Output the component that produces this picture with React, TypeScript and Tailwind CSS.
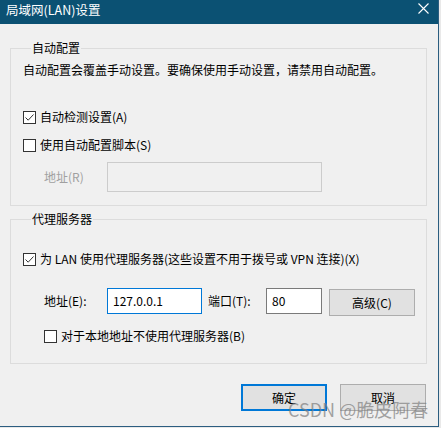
import React from 'react';

const FONT = '[font-family:"Noto_Sans_CJK_SC","Liberation_Sans",sans-serif]';

const CheckBox = ({ checked, label }: { checked?: boolean; label: string }) => (
    <div className="flex items-center gap-[4px] h-[16px]">
        <span className="w-[13px] h-[13px] border border-[#333333] bg-white flex items-center justify-center shrink-0">
            {checked && (
                <svg width="11" height="11" viewBox="0 0 11 11">
                    <path d="M1.5 5.5 L4.2 8.2 L9.5 2.5" fill="none" stroke="#333333" strokeWidth="1" />
                </svg>
            )}
        </span>
        <span className="text-[12px] leading-[16px] text-black whitespace-nowrap">{label}</span>
    </div>
);

const GroupBox = ({ title, className, children }: { title: string; className?: string; children: React.ReactNode }) => (
    <fieldset className={`ml-[10px] w-[417px] border border-[#dcdcdc] pl-[12px] ${className ?? ''}`}>
        <legend className="ml-[8px] px-[1px] text-[12px] leading-[16px] text-black">{title}</legend>
        {children}
    </fieldset>
);

export default function App() {
    return (
        <div className={`w-[441px] h-[428px] bg-[#e9e9e9] ${FONT}`}>
            <div className="relative w-[439px] h-[427px] bg-[#f0f0f0] border-r border-b border-[#2b5d80] flex flex-col">
                {/* title bar */}
                <div className="h-[24px] bg-[#0b5173] flex items-start justify-between pl-[6px] pr-[9px] shrink-0">
                    <span className="text-white text-[12.5px] leading-[18px] mt-[1px]">局域网(LAN)设置</span>
                    <svg width="11" height="11" viewBox="0 0 11 11" className="mt-[3px]">
                        <path d="M0.5 0.5 L10.5 10.5 M10.5 0.5 L0.5 10.5" stroke="#ffffff" strokeWidth="1.1" />
                    </svg>
                </div>

                <GroupBox title="自动配置" className="mt-[16px] pb-[13px]">
                    <p className="mt-[6px] text-[12px] leading-[16px] text-black">
                        自动配置会覆盖手动设置。要确保使用手动设置，请禁用自动配置。
                    </p>
                    <div className="mt-[31px]">
                        <CheckBox checked label="自动检测设置(A)" />
                    </div>
                    <div className="mt-[12px]">
                        <CheckBox label="使用自动配置脚本(S)" />
                    </div>
                    <div className="mt-[9px] flex items-center">
                        <span className="w-[63px] ml-[21px] text-[12px] leading-[16px] text-[#a0a0a0]">地址(R)</span>
                        <div className="w-[215px] h-[30px] border border-[#cccccc] bg-[#f0f0f0]" />
                    </div>
                </GroupBox>

                <GroupBox title="代理服务器" className="mt-[5px] pb-[19px]">
                    <div className="mt-[24px]">
                        <CheckBox checked label="为 LAN 使用代理服务器(这些设置不用于拨号或 VPN 连接)(X)" />
                    </div>
                    <div className="mt-[21px] ml-[21px] flex items-start">
                        <span className="w-[63px] h-[26px] flex items-center text-[12px] text-black">地址(E):</span>
                        <div className="w-[95px] h-[26px] border border-[#0078d7] bg-white flex items-center pl-[5px] text-[12px] text-black">
                            127.0.0.1
                        </div>
                        <span className="ml-[6px] w-[58px] h-[26px] flex items-center text-[12px] text-black">端口(T):</span>
                        <div className="w-[56px] h-[26px] border border-[#7a7a7a] bg-white flex items-center pl-[5px] text-[12px] text-black">
                            80
                        </div>
                        <button className="ml-[7px] mt-[1px] w-[86px] h-[27px] border border-[#adadad] bg-[#e1e1e1] text-[12px] text-black">
                            高级(C)
                        </button>
                    </div>
                    <div className="mt-[12px] ml-[21px]">
                        <CheckBox label="对于本地地址不使用代理服务器(B)" />
                    </div>
                </GroupBox>

                {/* dialog buttons */}
                <div className="mt-[20px] flex justify-end gap-[13px] pr-[12px]">
                    <button className="w-[86px] h-[27px] border-2 border-[#0078d7] bg-[#e1e1e1] text-[12px] text-black">确定</button>
                    <button className="w-[86px] h-[27px] border border-[#adadad] bg-[#e1e1e1] text-[12px] text-black">取消</button>
                </div>

                {/* watermark */}
                <span className="absolute left-[288px] top-[398px] text-[18px] leading-[22px] text-[#7d7d7d]/70 whitespace-nowrap">
                    CSDN @脆皮阿春
                </span>
            </div>
        </div>
    );
}
